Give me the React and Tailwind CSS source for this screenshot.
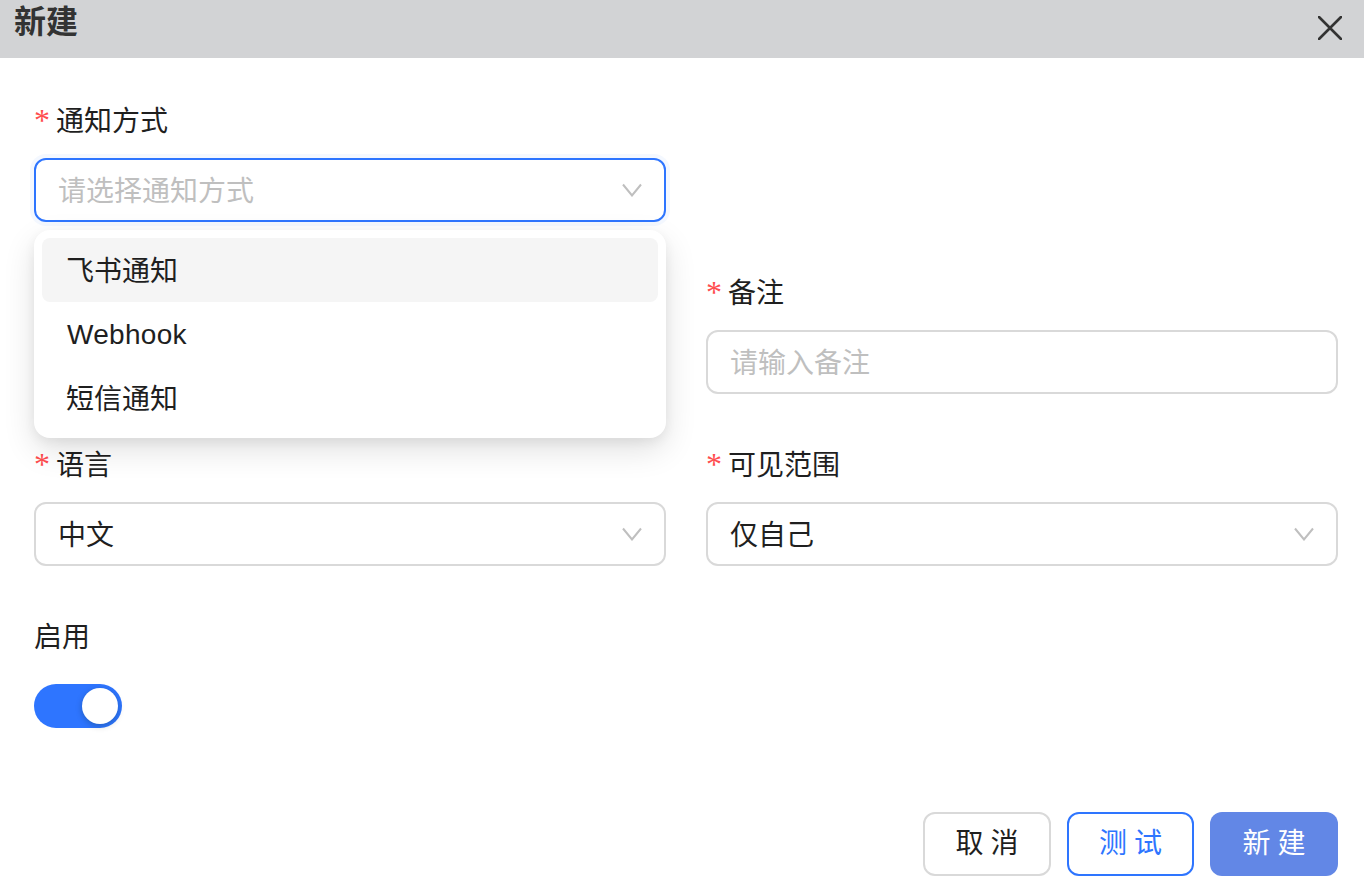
import React from 'react';

const FONT = "font-['Liberation_Sans','Noto_Sans_CJK_SC',sans-serif]";

const Chevron = () => (
  <svg width="20" height="14" viewBox="0 0 20 14" fill="none" className="shrink-0">
    <path d="M1 1.5 L10 12.5 L19 1.5" stroke="#bfbfbf" strokeWidth="2" />
  </svg>
);

const Label = ({ children, required = true }) => (
  <div className="flex items-center h-11 mb-4 text-[28px] text-[#1f1f1f]">
    {required && <span className="w-[22px] font-['Liberation_Serif',serif] text-[32px] text-[#ff4d4f] leading-none">*</span>}
    <span className="pt-1">{children}</span>
  </div>
);

const SelectBox = ({ value, placeholder, focused }) => (
  <div
    className={
      focused
        ? 'flex items-center justify-between h-16 pl-[22px] pr-[22px] rounded-xl border-2 border-[#2e75ff] bg-white ring-4 ring-[#2e75ff]/5'
        : 'flex items-center justify-between h-16 pl-[22px] pr-[22px] rounded-xl border-2 border-[#d9d9d9] bg-white'
    }
  >
    <span className={value ? 'pt-1 text-[28px] text-[#1f1f1f]' : 'pt-1 text-[28px] text-[#bfbfbf]'}>{value || placeholder}</span>
    <Chevron />
  </div>
);

const NOTIFY_OPTIONS = ['飞书通知', 'Webhook', '短信通知'];

export default function App() {
  return (
    <div className={`${FONT} flex flex-col h-[892px] bg-white overflow-hidden`}>
      {/* header */}
      <div className="flex items-start justify-between h-[58px] shrink-0 bg-[#d2d3d5] pl-[14px] pr-[22px]">
        <h2 className="text-[32px] leading-[44px] font-semibold text-[#333333]">新建</h2>
        <button type="button" className="mt-4">
          <svg width="24" height="24" viewBox="0 0 24 24" fill="none" className="block">
            <path d="M1 1 L23 23 M23 1 L1 23" stroke="#333333" strokeWidth="2.6" strokeLinecap="round" />
          </svg>
        </button>
      </div>

      {/* form */}
      <div className="relative grid grid-cols-2 gap-x-10 gap-y-12 pt-10 pl-[34px] pr-[26px]">
        <div className="col-span-2 relative w-[632px]">
          <Label>通知方式</Label>
          <SelectBox placeholder="请选择通知方式" focused />
          {/* open dropdown */}
          <div className="absolute z-10 left-0 right-0 top-[132px] p-2 rounded-2xl bg-white shadow-[0_12px_32px_rgba(0,0,0,0.12),0_4px_12px_rgba(0,0,0,0.06)]">
            {NOTIFY_OPTIONS.map((opt, i) => (
              <div
                key={opt}
                className={
                  i === 0
                    ? 'flex items-center h-16 px-6 pt-1 rounded-lg bg-[#f5f5f5] text-[28px] text-[#1f1f1f]'
                    : i === 1
                      ? 'flex items-center h-16 pl-[25px] pr-6 pt-0.5 rounded-lg text-[28px] tracking-[0.3px] text-[#1f1f1f]'
                      : 'flex items-center h-16 px-6 pt-1 rounded-lg text-[28px] text-[#1f1f1f]'
                }
              >
                {opt}
              </div>
            ))}
          </div>
        </div>

        <div className="h-[124px]" />
        <div>
          <Label>备注</Label>
          <div className="flex items-center h-16 px-[22px] pt-1 rounded-xl border-2 border-[#d9d9d9] text-[28px] text-[#bfbfbf]">
            请输入备注
          </div>
        </div>

        <div>
          <Label>语言</Label>
          <SelectBox value="中文" />
        </div>
        <div>
          <Label>可见范围</Label>
          <SelectBox value="仅自己" />
        </div>

        <div className="col-span-2">
          <Label required={false}>启用</Label>
          <div className="flex items-center justify-end w-[88px] h-11 mt-[26px] pr-1 rounded-full bg-[#2e75ff]">
            <div className="w-9 h-9 rounded-full bg-white shadow-[0_2px_6px_rgba(0,35,11,0.25)]" />
          </div>
        </div>
      </div>

      {/* footer */}
      <div className="flex justify-end gap-4 mt-auto pb-4 pr-[26px]">
        <button type="button" className="w-32 h-16 rounded-xl border-2 border-[#d9d9d9] bg-white text-[28px] tracking-[0.25em] indent-[0.25em] text-[#1f1f1f]">
          取消
        </button>
        <button type="button" className="w-[127px] h-16 rounded-xl border-2 border-[#2e75ff] bg-white text-[28px] tracking-[0.25em] indent-[0.25em] text-[#2e75ff]">
          测试
        </button>
        <button type="button" className="w-32 h-16 rounded-xl bg-[#6287e6] text-[28px] tracking-[0.25em] indent-[0.25em] text-white">
          新建
        </button>
      </div>
    </div>
  );
}
